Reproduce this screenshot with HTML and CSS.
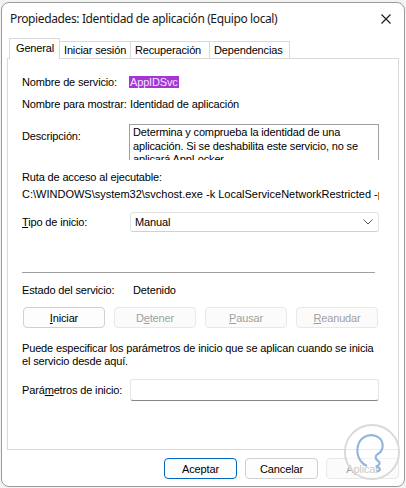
FILE: index.html
```html
<!DOCTYPE html>
<html lang="es">

<head>
  <meta charset="UTF-8">
  <title>Propiedades: Identidad de aplicación (Equipo local)</title>
  <link rel="stylesheet" href="styles.css">
</head>

<body>
  <div class="window">
    <div class="titlebar">
      <span class="title">Propiedades: Identidad de aplicación (Equipo local)</span>
      <svg class="close" width="10" height="10" viewBox="0 0 10 10">
        <path d="M0.5 0.5 L9.5 9.5 M9.5 0.5 L0.5 9.5" stroke="#1a1a1a" stroke-width="1.1" fill="none" />
      </svg>
    </div>

    <div class="tabs">
      <div class="tab active">General</div>
      <div class="tab">Iniciar sesión</div>
      <div class="tab">Recuperación</div>
      <div class="tab">Dependencias</div>
    </div>

    <div class="panel">
      <div class="row">
        <span class="label">Nombre de servicio:</span>
        <span class="value"><span class="selected">AppIDSvc</span></span>
      </div>
      <div class="row row-display">
        <span class="label">Nombre para mostrar:</span>
        <span class="value">Identidad de aplicación</span>
      </div>
      <div class="row row-desc">
        <span class="label">Descripción:</span>
        <div class="desc-box">Determina y comprueba la identidad de una aplicación. Si se deshabilita este servicio, no se aplicará AppLocker.</div>
      </div>

      <div class="path-label">Ruta de acceso al ejecutable:</div>
      <div class="path">C:\WINDOWS\system32\svchost.exe -k LocalServiceNetworkRestricted -p</div>

      <div class="row row-start">
        <span class="label"><u>T</u>ipo de inicio:</span>
        <div class="select">
          <span>Manual</span>
          <svg width="10" height="6" viewBox="0 0 10 6">
            <path d="M0.5 0.5 L5 5 L9.5 0.5" stroke="#5a5a5a" stroke-width="1" fill="none" />
          </svg>
        </div>
      </div>

      <div class="separator"></div>

      <div class="row row-status">
        <span class="label">Estado del servicio:</span>
        <span class="value status">Detenido</span>
      </div>

      <div class="service-buttons">
        <button class="btn"><u>I</u>niciar</button>
        <button class="btn disabled">D<u>e</u>tener</button>
        <button class="btn disabled"><u>P</u>ausar</button>
        <button class="btn disabled"><u>R</u>eanudar</button>
      </div>

      <p class="hint">Puede especificar los parámetros de inicio que se aplican cuando se inicia el servicio desde aquí.</p>

      <div class="row row-params">
        <span class="label">Pará<u>m</u>etros de inicio:</span>
        <div class="input"></div>
      </div>
    </div>

    <div class="footer">
      <button class="btn default">Aceptar</button>
      <button class="btn">Cancelar</button>
      <button class="btn disabled">Aplicar</button>
    </div>

    <!-- watermark -->
    <svg class="watermark" width="58" height="58" viewBox="0 0 60 60">
      <circle cx="30" cy="30" r="28" fill="rgba(255,255,255,0.45)" stroke="#d9d9d9" stroke-width="2" />
      <path d="M24 44 C16 40 13 30 16 22 C19 13 30 10 37 15 C43 20 42 29 36 32 C33 34 33 37 36 39 C39 41 38 44 34 45 C38 46 40 48 36 50"
        stroke="#93b4db" stroke-width="2.2" fill="none" stroke-linecap="round" />
    </svg>
  </div>
</body>

</html>
```

FILE: styles.css
```css
* {
  margin: 0;
  padding: 0;
  box-sizing: border-box;
}

body {
  background: #f3f3f3;
  font-family: 'Liberation Sans', Arial, sans-serif;
  font-size: 11px;
  letter-spacing: -0.15px;
  color: #000;
  width: 406px;
  height: 488px;
  overflow: hidden;
}

.window {
  position: relative;
  margin: 2px 0 0 1px;
  width: 404px;
  height: 485px;
  background: #fff;
  border: 1px solid #9c9c9c;
  border-radius: 8px;
  padding: 0 5px;
  overflow: hidden;
}

/* Title bar */
.titlebar {
  height: 35px;
  display: flex;
  align-items: center;
  justify-content: space-between;
  padding: 0 7px 4px 3px;
}

.title {
  font-family: 'Noto Sans', 'Open Sans', sans-serif;
  font-size: 12px;
  letter-spacing: -0.38px;
  color: #1a1a1a;
}

.close {
  margin-right: 1px;
}

/* Tabs */
.tabs {
  display: flex;
  align-items: flex-end;
  height: 20px;
  padding-left: 2px;
}

.tab {
  height: 17px;
  line-height: 16px;
  padding: 0 4px;
  white-space: nowrap;
  border: 1px solid #d9d9d9;
  border-bottom: none;
  border-left: none;
  background: #fff;
  color: #000;
}

.tab.active {
  height: 21px;
  line-height: 18px;
  margin-bottom: -1px;
  border-left: 1px solid #d9d9d9;
  position: relative;
  z-index: 1;
  width: 51px;
  padding-left: 6px;
}

.tab:nth-child(2) {
  width: 71px;
}

.tab:nth-child(3) {
  width: 79px;
}

.tab:nth-child(4) {
  width: 80px;
}

/* Panel */
.panel {
  height: 392px;
  border: 1px solid #d9d9d9;
  padding: 17px 18px 0 14px;
}

.row {
  display: flex;
  align-items: flex-start;
  line-height: 13px;
}

.label {
  width: 108px;
  flex-shrink: 0;
  white-space: nowrap;
}

.value {
  white-space: nowrap;
}

.selected {
  background: #a437d4;
  color: #f3e6ff;
  padding: 0 1px;
  margin-left: -1px;
}

.row-display {
  margin-top: 9px;
}

.row-desc {
  margin-top: 13px;
}

.row-desc .label {
  margin-top: 6px;
}

.desc-box {
  width: 250px;
  height: 36px;
  border: 1px solid #a0a0a0;
  border-bottom: none;
  padding: 1px 3px 0 3px;
  line-height: 13.5px;
  overflow: hidden;
  margin-left: -1px;
}

.path-label {
  margin-top: 11px;
  line-height: 13px;
}

.path {
  margin-top: 4px;
  line-height: 13px;
  letter-spacing: 0;
  white-space: nowrap;
  overflow: hidden;
  width: 357px;
}

.row-start {
  margin-top: 11px;
  align-items: center;
}

.select {
  width: 249px;
  height: 20px;
  border: 1px solid #e2e2e2;
  border-bottom-color: #d0d0d0;
  border-radius: 3px;
  display: flex;
  align-items: center;
  justify-content: space-between;
  padding: 0 5px 0 4px;
}

.separator {
  margin-top: 40px;
  width: 353px;
  height: 1px;
  background: #a0a0a0;
}

.row-status {
  margin-top: 11px;
}

.status {
  padding-left: 3px;
}

.service-buttons {
  margin-top: 10px;
  display: grid;
  grid-template-columns: repeat(4, 82px);
  column-gap: 9px;
  padding-left: 1px;
}

.btn {
  height: 21px;
  font-family: inherit;
  font-size: 11px;
  letter-spacing: -0.15px;
  background: #fdfdfd;
  border: 1px solid #d0d0d0;
  border-radius: 4px;
  color: #000;
}

.btn.disabled {
  border-color: #e8e8e8;
  color: #a0a0a0;
  background: #fbfbfb;
}

.btn.default {
  border-color: #0067c0;
}

.hint {
  margin-top: 14px;
  line-height: 13px;
  width: 356px;
}

.row-params {
  margin-top: 11px;
  align-items: center;
}

.input {
  width: 249px;
  height: 22px;
  border: 1px solid #e5e5e5;
  border-bottom-color: #868686;
  border-radius: 3px;
}

/* Footer buttons */
.footer {
  display: flex;
  justify-content: flex-end;
  gap: 8px;
  margin-top: 8px;
}

.footer .btn {
  width: 73px;
}

.watermark {
  position: absolute;
  right: 3px;
  top: 420px;
}
```
